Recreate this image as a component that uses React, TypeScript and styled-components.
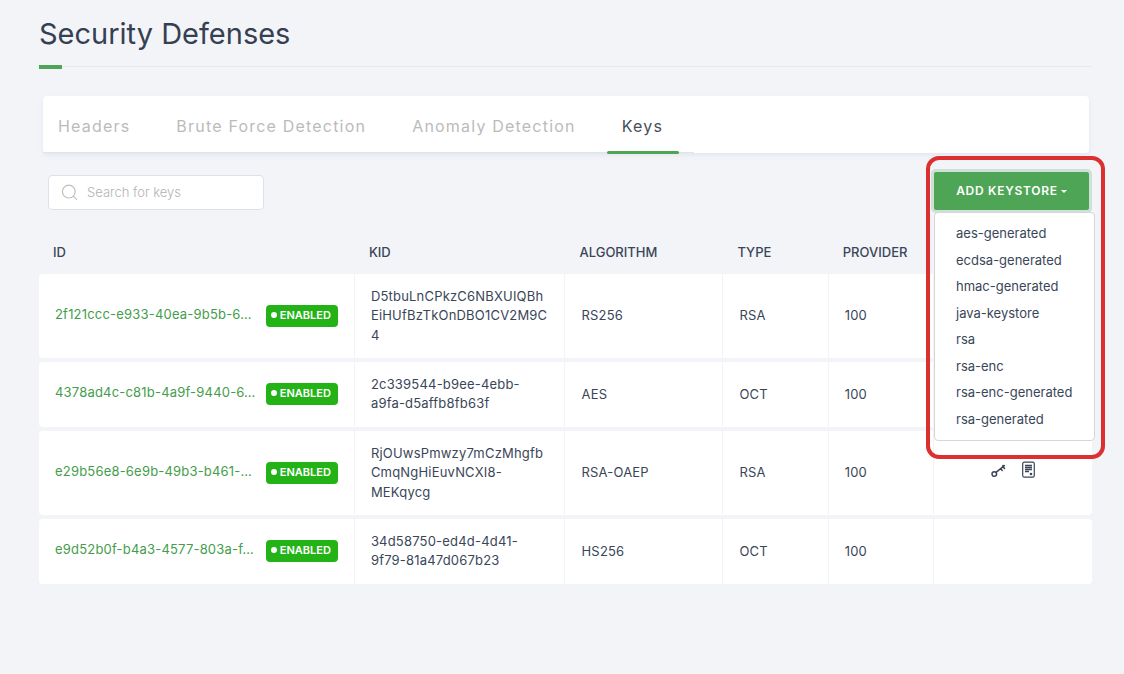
import React from "react";
import styled, { createGlobalStyle } from "styled-components";

const ink = "#3a4658";
const canvas = "#f2f4f8";
const green = "#4ea555";

const GlobalStyle = createGlobalStyle`
  *, *::before, *::after { box-sizing: border-box; }
  body {
    margin: 0;
    background: ${canvas};
    color: ${ink};
    font-family: Inter, "Liberation Sans", sans-serif;
    font-size: 13px;
    line-height: 1.49;
  }
`;

const Page = styled.main`
  padding: 12px 32px 40px 39px;
`;

const PageHeader = styled.header`
  position: relative;
  padding-bottom: 10px;
  border-bottom: 1px solid #e6e8ee;

  &::after {
    content: "";
    position: absolute;
    left: 0;
    bottom: -3px;
    width: 23px;
    height: 4px;
    background: ${green};
  }
`;

const Title = styled.h1`
  margin: 0;
  font-size: 29px;
  font-weight: 400;
  line-height: 44px;
  color: #354052;
`;

const TabCard = styled.nav`
  display: flex;
  margin: 29px 3px 0 4px;
  background: #fff;
  border-radius: 4px;
  box-shadow: 0 2px 4px rgba(190, 198, 220, 0.3);
`;

const TabList = styled.div`
  display: flex;
  gap: 15px;
  padding-right: 15px;
  border-bottom: 1px solid #dfe3ec;
`;

const Tab = styled.a<{ $active?: boolean }>`
  position: relative;
  padding: 16px 16px 12px 15px;
  font-size: 16px;
  line-height: 28px;
  letter-spacing: 0.075em;
  text-decoration: none;
  color: ${(p) => (p.$active ? "#464d57" : "#bbb")};

  &::after {
    content: "";
    display: ${(p) => (p.$active ? "block" : "none")};
    position: absolute;
    left: 0;
    right: 0;
    bottom: -2px;
    height: 3px;
    border-radius: 2px;
    background: ${green};
  }
`;

const Toolbar = styled.div`
  display: flex;
  justify-content: space-between;
  align-items: flex-end;
  margin: 19px 3px 0 9px;
`;

const SearchBox = styled.label`
  display: flex;
  align-items: center;
  gap: 9px;
  width: 216px;
  height: 35px;
  padding: 0 12px;
  background: #fff;
  border: 1px solid #dde1ec;
  border-radius: 4px;
`;

const SearchInput = styled.input`
  flex: 1;
  min-width: 0;
  padding: 0;
  border: 0;
  outline: 0;
  background: transparent;
  font: inherit;
  font-weight: 300;
  color: ${ink};

  &::placeholder { color: #b3b3b3; opacity: 1; }
`;

const Dropdown = styled.div`
  position: relative;
`;

const DropdownButton = styled.button`
  display: flex;
  align-items: center;
  justify-content: center;
  gap: 3px;
  width: 155px;
  height: 38px;
  padding: 0;
  border: 0;
  border-radius: 2px;
  background: ${green};
  box-shadow: 0 0 0 3px #cfe1d6;
  color: #fff;
  font: inherit;
  font-size: 12px;
  font-weight: 600;
  letter-spacing: 0.06em;
`;

const Caret = styled.span`
  border: 3px solid transparent;
  border-top-color: #fff;
  border-bottom: 0;
`;

const Menu = styled.ul`
  position: absolute;
  z-index: 2;
  top: 40px;
  left: 0;
  width: 161px;
  margin: 0;
  padding: 7px 0;
  list-style: none;
  background: #fff;
  border: 1px solid #d3d6da;
  border-radius: 4px;
`;

const MenuItem = styled.a`
  display: block;
  padding: 4px 21px;
  line-height: 1.43;
  color: ${ink};
  text-decoration: none;
  white-space: nowrap;
`;

const Highlight = styled.div`
  position: absolute;
  z-index: 3;
  inset: -16px -16px auto -8px;
  height: 303px;
  border: 4px solid #dc2f2f;
  border-radius: 13px;
  pointer-events: none;
`;

const Table = styled.table`
  width: 100%;
  margin-top: 24px;
  table-layout: fixed;
  border-collapse: separate;
  border-spacing: 0 4px;
`;

const HeadCell = styled.th<{ $width: number }>`
  width: ${(p) => p.$width}%;
  height: 32px;
  padding: 0 14px 2px;
  font-weight: 500;
  text-align: left;
  vertical-align: middle;
`;

const Cell = styled.td`
  padding: 13px 16px;
  background: #fff;
  border-right: 1px solid ${canvas};
  letter-spacing: 0.015em;
  vertical-align: middle;
  overflow-wrap: anywhere;

  &:first-child { border-radius: 4px 0 0 4px; }
  &:last-child { border-right: 0; border-radius: 0 4px 4px 0; }
`;

const IdGroup = styled.div`
  display: flex;
  align-items: flex-start;
  justify-content: space-between;
`;

const KeyLink = styled.a`
  color: #449d4b;
  text-decoration: none;
  white-space: nowrap;
`;

const Badge = styled.span`
  display: flex;
  align-items: center;
  gap: 3px;
  height: 22px;
  padding: 0 7px 2px 5px;
  border-radius: 4px;
  background: #23b317;
  color: #fff;
  font-size: 11px;
  font-weight: 600;
  letter-spacing: 0;
`;

const Dot = styled.span`
  width: 6px;
  height: 6px;
  border-radius: 50%;
  background: #fff;
`;

const Actions = styled.div`
  display: flex;
  justify-content: center;
  gap: 16px;
  padding-bottom: 6px;
`;

const IconButton = styled.button`
  display: flex;
  padding: 0;
  border: 0;
  background: transparent;
  color: ${ink};
`;

const SearchIcon = () => (
  <svg width="17" height="17" viewBox="0 0 17 17" fill="none" stroke="#bfbfbf" strokeWidth="1.2" strokeLinecap="round" aria-hidden="true">
    <circle cx="7.8" cy="7.6" r="6.4" />
    <path d="M12.6 12.4 15.5 15.3" />
  </svg>
);

const KeyIcon = () => (
  <svg width="15" height="18" viewBox="0 0 15 18" fill="none" stroke="currentColor" strokeWidth="1.5" strokeLinecap="round" strokeLinejoin="round" aria-hidden="true">
    <circle cx="3.3" cy="13" r="2.3" />
    <path d="M5 11.3 13.4 4.6M9.6 7.6l1.6 1.9M11.8 5.4l.1-.8M12 6l1.5 1.4" />
  </svg>
);

const CertificateIcon = () => (
  <svg width="13" height="18" viewBox="0 0 13 18" fill="none" stroke="currentColor" aria-hidden="true">
    <rect x="0.7" y="1.2" width="11.6" height="15" rx="1.6" strokeWidth="1.2" />
    <path d="M3 4.5h7M3 6.5h7M3 8.5h7M3 10.5h4" strokeWidth="1.3" />
    <circle cx="9" cy="13" r="1.3" fill="currentColor" stroke="none" />
  </svg>
);

const tabs = ["Headers", "Brute Force Detection", "Anomaly Detection", "Keys"];

const keystores = [
  "aes-generated",
  "ecdsa-generated",
  "hmac-generated",
  "java-keystore",
  "rsa",
  "rsa-enc",
  "rsa-enc-generated",
  "rsa-generated",
];

const columns = [
  { label: "ID", width: 30 },
  { label: "KID", width: 20 },
  { label: "ALGORITHM", width: 15 },
  { label: "TYPE", width: 10 },
  { label: "PROVIDER", width: 10 },
  { label: "", width: 15 },
];

const keys = [
  { id: "2f121ccc-e933-40ea-9b5b-6…", kid: "D5tbuLnCPkzC6NBXUIQBhEiHUfBzTkOnDBO1CV2M9C4", algorithm: "RS256", type: "RSA", provider: 100 },
  { id: "4378ad4c-c81b-4a9f-9440-6…", kid: "2c339544-b9ee-4ebb-a9fa-d5affb8fb63f", algorithm: "AES", type: "OCT", provider: 100 },
  { id: "e29b56e8-6e9b-49b3-b461-…", kid: "RjOUwsPmwzy7mCzMhgfbCmqNgHiEuvNCXI8-MEKqycg", algorithm: "RSA-OAEP", type: "RSA", provider: 100 },
  { id: "e9d52b0f-b4a3-4577-803a-f…", kid: "34d58750-ed4d-4d41-9f79-81a47d067b23", algorithm: "HS256", type: "OCT", provider: 100 },
];

export default function App() {
  return (
    <>
      <GlobalStyle />
      <Page>
        <PageHeader>
          <Title>Security Defenses</Title>
        </PageHeader>

        <TabCard>
          <TabList>
            {tabs.map((tab) => (
              <Tab key={tab} href="#" $active={tab === "Keys"}>{tab}</Tab>
            ))}
          </TabList>
        </TabCard>

        <Toolbar>
          <SearchBox>
            <SearchIcon />
            <SearchInput type="text" placeholder="Search for keys" aria-label="Search for keys" />
          </SearchBox>
          <Dropdown>
            <DropdownButton type="button" aria-haspopup="true" aria-expanded="true">
              ADD KEYSTORE
              <Caret />
            </DropdownButton>
            <Menu>
              {keystores.map((name) => (
                <li key={name}><MenuItem href="#">{name}</MenuItem></li>
              ))}
            </Menu>
            <Highlight />
          </Dropdown>
        </Toolbar>

        <Table>
          <thead>
            <tr>
              {columns.map((c) => (
                <HeadCell key={c.label} $width={c.width} scope="col">{c.label}</HeadCell>
              ))}
            </tr>
          </thead>
          <tbody>
            {keys.map((k) => (
              <tr key={k.id}>
                <Cell>
                  <IdGroup>
                    <KeyLink href="#">{k.id}</KeyLink>
                    <Badge><Dot />ENABLED</Badge>
                  </IdGroup>
                </Cell>
                <Cell>{k.kid}</Cell>
                <Cell>{k.algorithm}</Cell>
                <Cell>{k.type}</Cell>
                <Cell>{k.provider}</Cell>
                <Cell>
                  {k.type === "RSA" && (
                    <Actions>
                      <IconButton type="button" aria-label="Public key"><KeyIcon /></IconButton>
                      <IconButton type="button" aria-label="Certificate"><CertificateIcon /></IconButton>
                    </Actions>
                  )}
                </Cell>
              </tr>
            ))}
          </tbody>
        </Table>
      </Page>
    </>
  );
}
